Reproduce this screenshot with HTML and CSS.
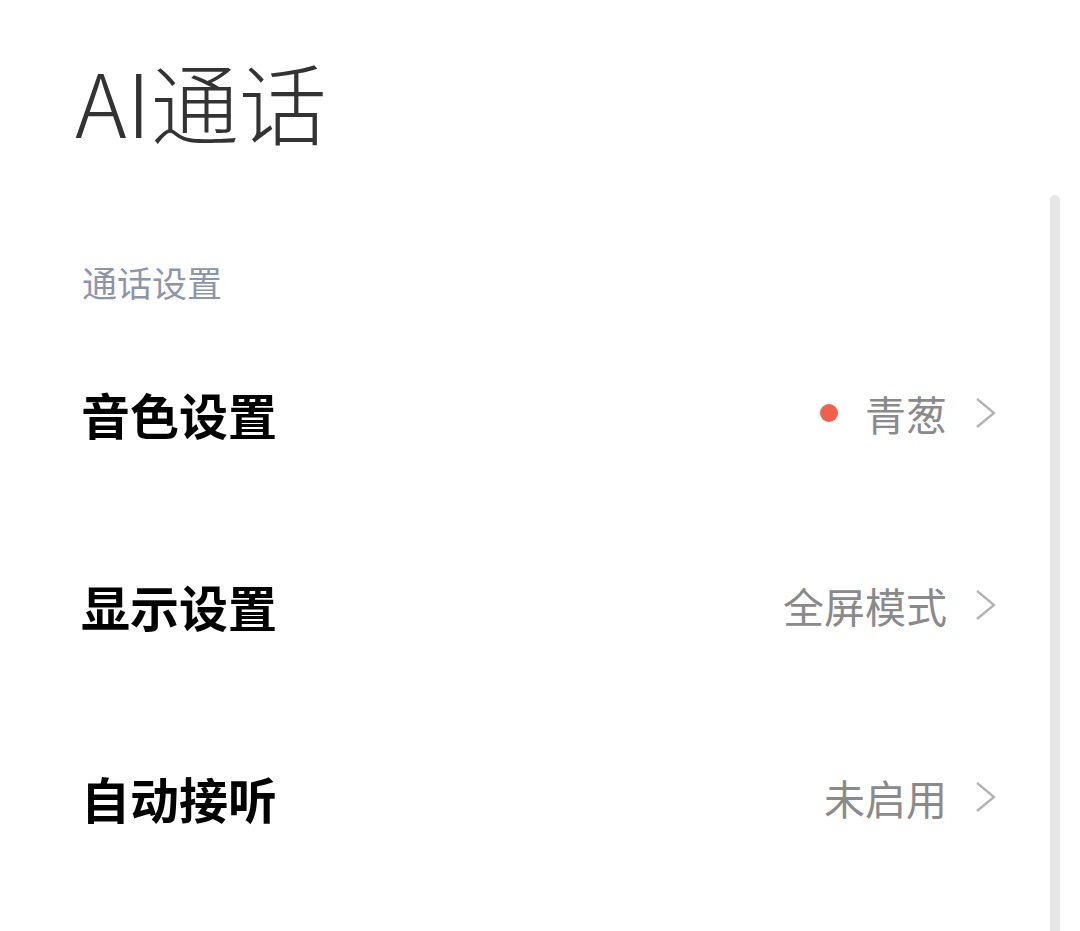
FILE: index.html
```html
<!DOCTYPE html>
<html lang="zh-CN">
<head>
    <meta charset="UTF-8">
    <meta name="viewport" content="width=device-width, initial-scale=1.0">
    <title>AI通话</title>
    <link rel="stylesheet" href="styles.css">
</head>
<body>
    <div class="page">
        <h1 class="page-title">AI通话</h1>

        <div class="section-label">通话设置</div>

        <div class="setting-list">
            <div class="setting-item">
                <div class="setting-name">音色设置</div>
                <div class="setting-value">
                    <span class="dot"></span>
                    <span class="value-text">青葱</span>
                    <svg class="chevron" viewBox="0 0 22 32"><path d="M2 2 L19 16 L2 30"/></svg>
                </div>
            </div>
            <div class="setting-item">
                <div class="setting-name">显示设置</div>
                <div class="setting-value">
                    <span class="value-text">全屏模式</span>
                    <svg class="chevron" viewBox="0 0 22 32"><path d="M2 2 L19 16 L2 30"/></svg>
                </div>
            </div>
            <div class="setting-item">
                <div class="setting-name">自动接听</div>
                <div class="setting-value">
                    <span class="value-text">未启用</span>
                    <svg class="chevron" viewBox="0 0 22 32"><path d="M2 2 L19 16 L2 30"/></svg>
                </div>
            </div>
        </div>

        <!-- 滚动指示条 -->
        <div class="scroll-bar"></div>
    </div>
</body>
</html>
```

FILE: styles.css
```css
body {
    margin: 0;
    padding: 0;
    font-family: "Noto Sans CJK SC", "Noto Sans", sans-serif;
    background: #ffffff;
    height: 931px;
    overflow: hidden;
}

.page {
    position: relative;
    height: 931px;
    padding: 0 83px 0 82px;
}

.page-title {
    margin: 0;
    padding-top: 48px;
    margin-left: -7px;
    font-size: 88px;
    line-height: 104px;
    font-weight: 300;
    color: #333333;
}

.section-label {
    margin-top: 110px;
    font-size: 35px;
    line-height: 40px;
    color: #8e95ab;
}

.setting-list {
    margin-top: 15px;
}

.setting-item {
    height: 192px;
    display: flex;
    align-items: center;
    justify-content: space-between;
}

.setting-name {
    margin-left: -1px;
    font-size: 49px;
    font-weight: 700;
    color: #000000;
}

.setting-value {
    display: flex;
    align-items: center;
}

.dot {
    width: 18px;
    height: 18px;
    border-radius: 50%;
    background: #f0604c;
    margin-right: 27px;
}

.value-text {
    font-size: 41px;
    color: #8a8a8a;
}

.chevron {
    width: 22px;
    height: 32px;
    margin-left: 28px;
    fill: none;
    stroke: #b3b3b3;
    stroke-width: 2.4;
}

.scroll-bar {
    position: absolute;
    top: 195px;
    left: 1050px;
    width: 10px;
    bottom: 0;
    background: #e6e6e6;
    border-radius: 5px 5px 0 0;
}
```
